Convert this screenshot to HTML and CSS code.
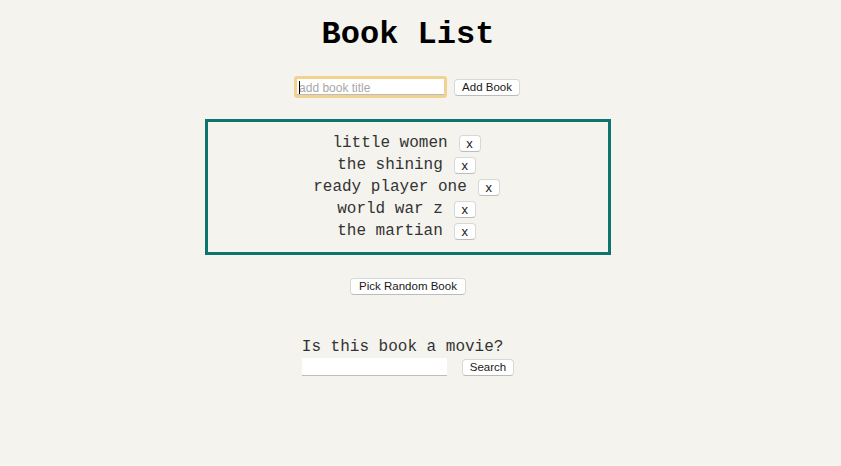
FILE: index.html
```html
<!DOCTYPE html>
<html>
<head>
<meta charset="utf-8">
<link rel="stylesheet" href="styles.css">
</head>
<body>
<main class="page">
  <h1 class="title">Book List</h1>
  <div class="add-row">
    <div class="focus-ring"><span class="caret"></span><input class="title-input" type="text" placeholder="add book title"></div>
    <button class="btn">Add Book</button>
  </div>
  <div class="book-box">
    <div class="book"><span>little women</span><button class="btn btn-x">x</button></div>
    <div class="book"><span>the shining</span><button class="btn btn-x">x</button></div>
    <div class="book"><span>ready player one</span><button class="btn btn-x">x</button></div>
    <div class="book"><span>world war z</span><button class="btn btn-x">x</button></div>
    <div class="book"><span>the martian</span><button class="btn btn-x">x</button></div>
  </div>
  <div class="random-row"><button class="btn btn-wide">Pick Random Book</button></div>
  <div class="movie">
    <div class="movie-q">Is this book a movie?</div>
    <div class="search-row">
      <input class="search-input" type="text">
      <button class="btn">Search</button>
    </div>
  </div>
</main>
</body>
</html>
```
FILE: styles.css
```css
html, body {
  margin: 0;
  padding: 0;
  background: #f4f3ee;
}
body {
  padding: 0 8px;
  font-family: "Liberation Mono", "Courier New", monospace;
  color: #333;
}
.page {
  width: 798px;
  display: flex;
  flex-direction: column;
  align-items: center;
}
.title {
  font-family: "Liberation Mono", monospace;
  font-size: 32px;
  font-weight: bold;
  color: #000;
  margin: 16px 0 0 2px;
  line-height: 38px;
}
.add-row {
  display: flex;
  align-items: center;
  gap: 7px;
  margin-top: 22px;
}
.focus-ring {
  position: relative;
  width: 147px;
  height: 16px;
  border: 3px solid #f1d291;
  border-radius: 3px;
  background: #fff;
  box-shadow: inset 0 -1px 0 #bbb;
}
.title-input {
  border: none;
  outline: none;
  background: transparent;
  width: 143px;
  height: 16px;
  padding: 0 0 0 2px;
  font-family: "Liberation Sans", Arial, sans-serif;
  font-size: 12px;
  color: #333;
}
.title-input::placeholder { color: #a8a8a8; }
.caret {
  position: absolute;
  left: 2px;
  top: 2px;
  width: 1px;
  height: 13px;
  background: #000;
}
.btn {
  font-family: "Liberation Sans", Arial, sans-serif;
  font-size: 11.5px;
  color: #1a1a1a;
  background: #fff;
  border: 1px solid #d8d8d8;
  border-bottom-color: #bcbcbc;
  border-radius: 4px;
  height: 17px;
  padding: 0 7px;
  line-height: 15px;
  cursor: pointer;
}
.btn-wide {
  padding: 0 8px;
  margin-left: 2px;
}
.book-box {
  margin: 21px 0 0 2px;
  width: 400px;
  border: 3px solid #0e7470;
  padding: 10px 0;
  display: flex;
  flex-direction: column;
  align-items: center;
}
.book {
  height: 22px;
  display: flex;
  align-items: center;
  gap: 11px;
  font-size: 16px;
  color: #333;
  margin-right: 3px;
}
.btn-x {
  width: 22px;
  padding: 0;
  font-size: 13px;
  line-height: 15px;
}
.random-row {
  margin-top: 22px;
}
.movie {
  margin: 42px 0 0 2px;
  display: flex;
  flex-direction: column;
  align-items: flex-start;
}
.movie-q {
  font-size: 16px;
  line-height: 20px;
  color: #333;
  margin-bottom: 1px;
}
.search-row {
  display: flex;
  align-items: center;
  gap: 15px;
}
.search-input {
  width: 145px;
  height: 18px;
  box-sizing: border-box;
  border: none;
  border-bottom: 1px solid #bdbdbd;
  background: #fff;
  outline: none;
}
```
